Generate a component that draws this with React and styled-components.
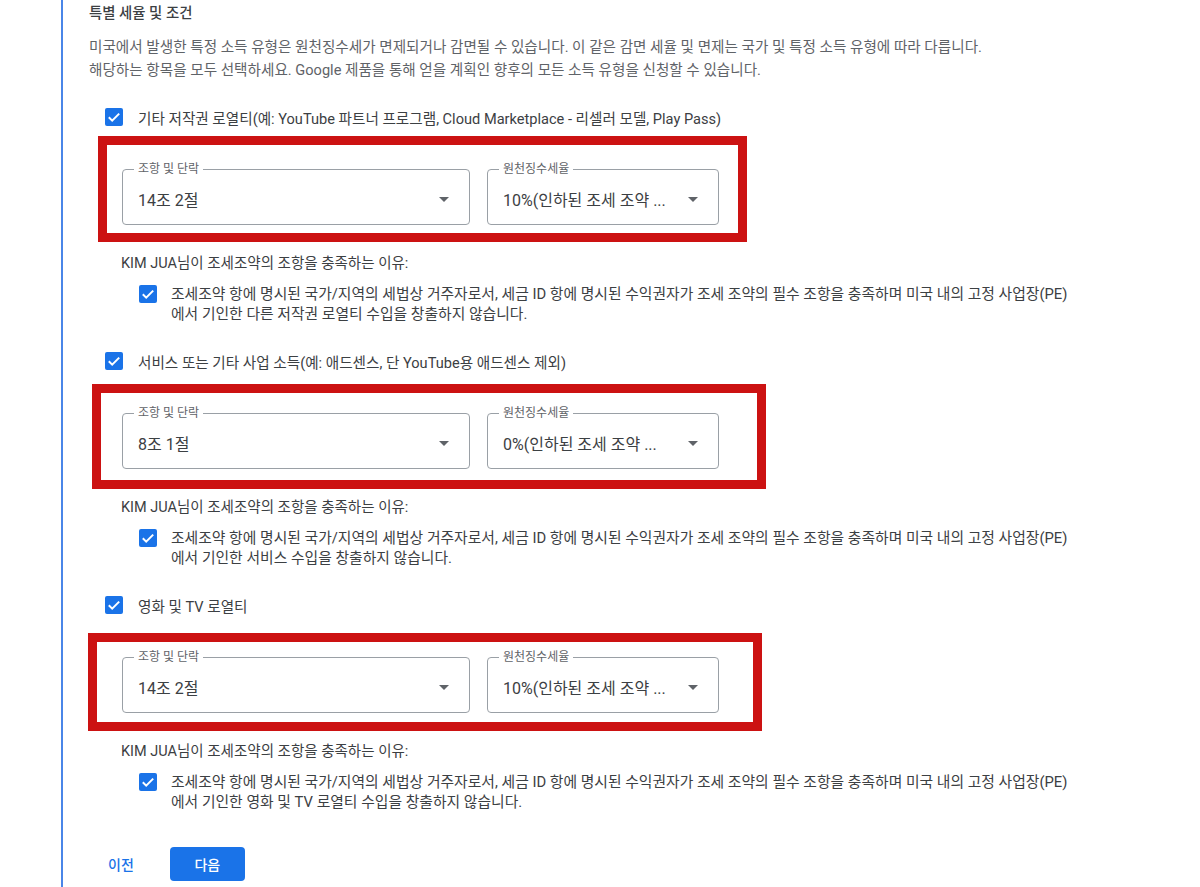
import React from "react";
import styled, { createGlobalStyle } from "styled-components";

const GlobalStyle = createGlobalStyle`
  html, body {
    margin: 0;
    padding: 0;
    background: #fff;
  }
  body {
    font-family: Roboto, "Noto Sans CJK KR", "Noto Sans", sans-serif;
    color: #3c4043;
  }
`;

const sections = [
  {
    label:
      "기타 저작권 로열티(예: YouTube 파트너 프로그램, Cloud Marketplace - 리셀러 모델, Play Pass)",
    article: "14조 2절",
    rate: "10%(인하된 조세 조약 ...",
    reason: "다른 저작권 로열티",
    frame: { t: -33, l: -24, r: -28, b: -17 },
  },
  {
    label: "서비스 또는 기타 사업 소득(예: 애드센스, 단 YouTube용 애드센스 제외)",
    article: "8조 1절",
    rate: "0%(인하된 조세 조약 ...",
    reason: "서비스",
    frame: { t: -29, l: -30, r: -47, b: -20 },
  },
  {
    label: "영화 및 TV 로열티",
    article: "14조 2절",
    rate: "10%(인하된 조세 조약 ...",
    reason: "영화 및 TV 로열티",
    frame: { t: -24, l: -34, r: -43, b: -18 },
  },
];

function Checkbox() {
  return (
    <CheckBox viewBox="0 0 18 18">
      <rect width="18" height="18" rx="2" fill="#1a73e8" />
      <polyline
        points="3.8,9.3 7.2,12.7 14.2,5.6"
        fill="none"
        stroke="#fff"
        strokeWidth="2"
      />
    </CheckBox>
  );
}

function Select({ label, value, width }) {
  return (
    <Field $w={width}>
      <FloatLabel>{label}</FloatLabel>
      <Value>{value}</Value>
      <Arrow viewBox="0 0 10 5">
        <path d="M0 0 L5 5 L10 0z" fill="#5f6368" />
      </Arrow>
    </Field>
  );
}

function App() {
  return (
    <>
      <GlobalStyle />
      <Page>
        <Panel>
          <Title>특별 세율 및 조건</Title>
          <Intro>
            미국에서 발생한 특정 소득 유형은 원천징수세가 면제되거나 감면될 수
            있습니다. 이 같은 감면 세율 및 면제는 국가 및 특정 소득 유형에 따라
            다릅니다.
            <br />
            해당하는 항목을 모두 선택하세요. Google 제품을 통해 얻을 계획인
            향후의 모든 소득 유형을 신청할 수 있습니다.
          </Intro>

          {sections.map((s, i) => (
            <Section key={i}>
              <OptionRow>
                <Checkbox />
                <span>{s.label}</span>
              </OptionRow>
              <FieldsRow>
                <Select label="조항 및 단락" value={s.article} width={348} />
                <Select label="원천징수세율" value={s.rate} width={232} />
                <Highlight
                  $t={s.frame.t}
                  $l={s.frame.l}
                  $r={s.frame.r}
                  $b={s.frame.b}
                />
              </FieldsRow>
              <Reason>KIM JUA님이 조세조약의 조항을 충족하는 이유:</Reason>
              <SubRow>
                <Checkbox />
                <p>
                  조세조약 항에 명시된 국가/지역의 세법상 거주자로서, 세금 ID
                  항에 명시된 수익권자가 조세 조약의 필수 조항을 충족하며 미국
                  내의 고정 사업장(PE)
                  <br />
                  에서 기인한 {s.reason} 수입을 창출하지 않습니다.
                </p>
              </SubRow>
            </Section>
          ))}

          <Actions>
            <TextButton>이전</TextButton>
            <PrimaryButton>다음</PrimaryButton>
          </Actions>
        </Panel>
      </Page>
    </>
  );
}

const Page = styled.div`
  padding-left: 61px;
  width: 1200px;
  box-sizing: border-box;
`;

const Panel = styled.div`
  border-left: 2px solid #4a86e8;
  padding: 4px 0 0 26px;
  min-height: 883px;
`;

const Title = styled.h2`
  margin: 0;
  font-size: 14.4px;
  font-weight: 500;
  line-height: 20px;
  color: #3c4043;
`;

const Intro = styled.p`
  margin: 12px 0 0;
  font-size: 14.6px;
  line-height: 23px;
  color: #5f6368;
  white-space: nowrap;
`;

const Section = styled.div`
  margin-top: 25px;
  & + & {
    margin-top: 27px;
  }
`;

const OptionRow = styled.div`
  display: flex;
  align-items: center;
  gap: 15px;
  margin-left: 16px;
  height: 20px;
  font-size: 14.6px;
  color: #3c4043;
`;

const CheckBox = styled.svg`
  width: 18px;
  height: 18px;
  flex: none;
`;

const FieldsRow = styled.div`
  position: relative;
  display: flex;
  gap: 17px;
  margin: 42px 0 0 33px;
  width: max-content;
`;

const Field = styled.div`
  position: relative;
  width: ${(p) => p.$w}px;
  height: 56px;
  box-sizing: border-box;
  border: 1px solid #9aa0a6;
  border-radius: 4px;
  display: flex;
  align-items: center;
  padding: 4px 20px 0 15px;
`;

const FloatLabel = styled.span`
  position: absolute;
  top: -8px;
  left: 11px;
  padding: 0 4px;
  background: #fff;
  font-size: 12px;
  line-height: 14px;
  color: #5f6368;
`;

const Value = styled.span`
  flex: 1;
  font-size: 16px;
  color: #3c4043;
  white-space: nowrap;
  overflow: hidden;
`;

const Arrow = styled.svg`
  width: 10px;
  height: 5px;
  flex: none;
  margin-left: 8px;
`;

const Highlight = styled.div`
  position: absolute;
  top: ${(p) => p.$t}px;
  left: ${(p) => p.$l}px;
  right: ${(p) => p.$r}px;
  bottom: ${(p) => p.$b}px;
  border: 9px solid #cc1212;
  pointer-events: none;
`;

const Reason = styled.div`
  margin: 29px 0 0 32px;
  font-size: 14.5px;
  line-height: 20px;
  color: #3c4043;
`;

const SubRow = styled.div`
  display: flex;
  align-items: flex-start;
  gap: 14px;
  margin: 10px 0 0 50px;
  font-size: 14.8px;
  line-height: 20px;
  color: #3c4043;
  svg {
    margin-top: 1px;
  }
  p {
    margin: 0;
    white-space: nowrap;
  }
`;

const Actions = styled.div`
  display: flex;
  align-items: center;
  gap: 36px;
  margin: 35px 0 0 19px;
`;

const TextButton = styled.button`
  border: none;
  background: none;
  padding: 0;
  font-family: inherit;
  font-size: 14px;
  font-weight: 500;
  color: #1a73e8;
  cursor: pointer;
`;

const PrimaryButton = styled.button`
  width: 75px;
  height: 34px;
  border: none;
  border-radius: 4px;
  background: #1a73e8;
  color: #fff;
  font-family: inherit;
  font-size: 14px;
  font-weight: 500;
  cursor: pointer;
`;

export default App;
